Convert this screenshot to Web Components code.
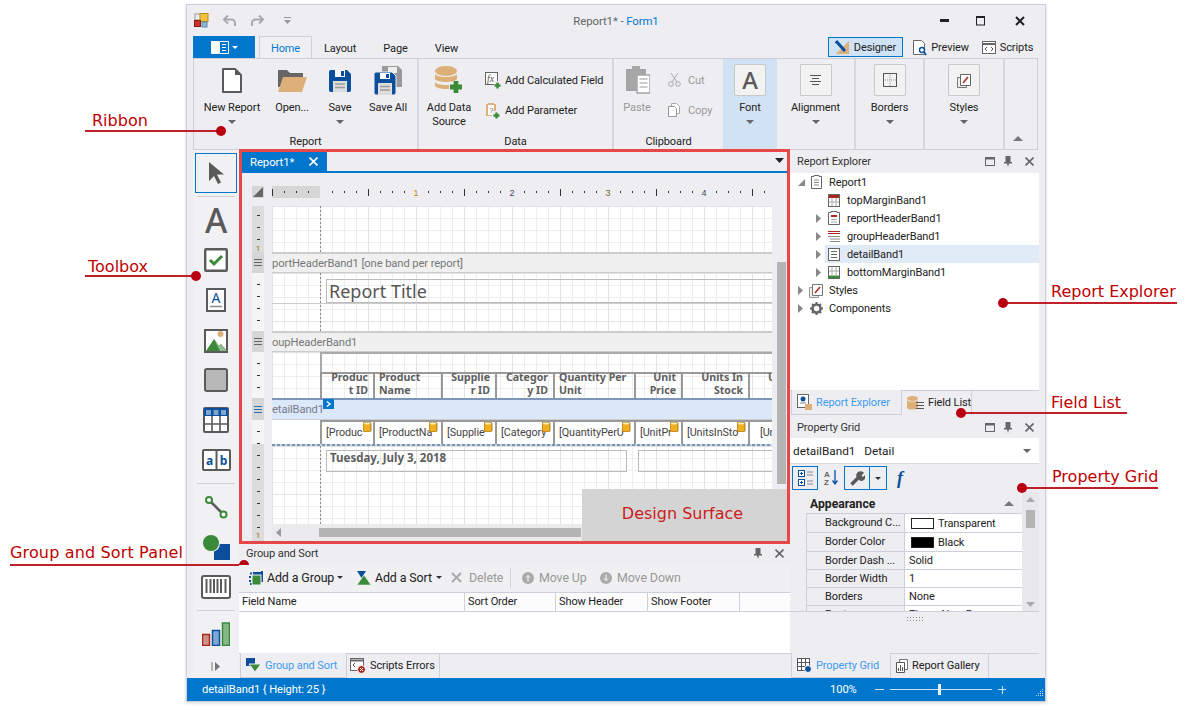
<!DOCTYPE html>
<html>
<head>
<meta charset="utf-8">
<title>Report Designer</title>
<style>
  html, body { margin: 0; background: #fff; }
  body { font: 11px Roboto, "Noto Sans", "Liberation Sans", sans-serif; letter-spacing: -0.1px; color: #222; width: 1186px; height: 710px; overflow: hidden; position: relative; }
</style>
</head>
<body>
<app-window>
  <title-bar></title-bar>
  <ribbon-tabs></ribbon-tabs>
  <ribbon-bar></ribbon-bar>
  <main-area>
    <tool-box slot="left"></tool-box>
    <design-surface slot="center"></design-surface>
    <group-sort slot="center"></group-sort>
    <report-explorer slot="right"></report-explorer>
    <property-grid slot="right"></property-grid>
  </main-area>
  <status-bar></status-bar>
</app-window>
<call-out dot="end" style="--x:85px;--y:130px;--w:136px;--tx:7px">Ribbon</call-out>
<call-out dot="end" style="--x:85px;--y:275px;--w:111px;--tx:3px;--by:-1px">Toolbox</call-out>
<call-out dot="end" style="--x:10px;--y:564px;--w:234px;--tx:0px;--by:2px;letter-spacing:.15px">Group and Sort Panel</call-out>
<call-out dot="start" style="--x:1003px;--y:302px;--w:174px;--tx:48px;--by:1px">Report Explorer</call-out>
<call-out dot="start" style="--x:961px;--y:412px;--w:166px;--tx:90px">Field List</call-out>
<call-out dot="start" style="--x:1022px;--y:487px;--w:136px;--tx:30px;--by:1px">Property Grid</call-out>

<script>
const G = '#5a5a5a', B = '#0b4f9c', GR = '#3a8a3a', T = '#dcb078', R = '#a8281b';
const plus = (x, y, s = 5, c = GR) => `<path d="M${x - s} ${y}h${s * 2}M${x} ${y - s}v${s * 2}" stroke="${c}" stroke-width="${s * 0.8}"/>`;

const ICONS = {
  logo: [15, 15, `<rect x="1" y="1" width="6" height="6" fill="#eee" stroke="#999"/><rect x="6" y="0.5" width="8" height="8" fill="#f2c23c" stroke="#b98a20"/><rect x="0.5" y="7.5" width="6" height="6" fill="#c8322a" stroke="#8a1a14"/><rect x="8" y="9" width="5" height="5" fill="#8fb7d8" stroke="#5a87a8"/>`],
  undo: [15, 13, `<path d="M6 1.5L2 5.5l4 4M2 5.5h7.5a3.5 3.5 0 0 1 3.5 3.5v3" fill="none" stroke="#aaa" stroke-width="2"/>`],
  redo: [15, 13, `<path d="M9 1.5l4 4-4 4M13 5.5H5.5A3.5 3.5 0 0 0 2 9v3" fill="none" stroke="#aaa" stroke-width="2"/>`],
  qa: [9, 7, `<path d="M1 0h7v1H1zM1 3h7L4.5 7z" fill="#999"/>`],
  appbook: [18, 13, `<path d="M.5.5h7v12h-7z" fill="#fff" stroke="#fff"/><path d="M8.5.5h9v12h-9z" fill="none" stroke="#fff"/><path d="M11 3.5h4M11 6.5h4M11 9.5h4" stroke="#fff"/>`],
  ddw: [6, 3, `<path d="M0 0h6L3 3z" fill="#fff"/>`],
  dd: [8, 4, `<path d="M0 0h8L4 4z" fill="#666"/>`],
  ddk: [6, 3, `<path d="M0 0h6L3 3z" fill="#333"/>`],
  win_min: [10, 3, `<rect width="9" height="3" fill="#222"/>`],
  win_max: [10, 10, `<rect x=".5" y="1" width="8" height="8" fill="none" stroke="#222"/><path d="M0 1h9" stroke="#222" stroke-width="2"/>`],
  win_close: [10, 10, `<path d="M1 1l8 8M9 1l-8 8" stroke="#222" stroke-width="2"/>`],
  designer: [15, 16, `<path d="M14 2v13H1z" fill="${T}"/><path d="M11 9v3H7.5z" fill="#cfe0f4"/><path d="M1 2l9 10" stroke="${B}" stroke-width="3"/>`],
  preview: [14, 17, `<path d="M.5 1.5h8l3 3v11H.5z" fill="#fff" stroke="#666"/><circle cx="9" cy="11" r="2.5" fill="#fff" stroke="${B}" stroke-width="1.4"/><path d="M11 13l2 3" stroke="${B}" stroke-width="1.8"/>`],
  scripts: [14, 13, `<rect x=".5" y=".5" width="13" height="12" fill="#fff" stroke="#666"/><path d="M.5 3h13" stroke="#666" stroke-width="2"/><path d="M5 6L3 8l2 2M9 6l2 2-2 2" fill="none" stroke="#555"/>`],
  newdoc: [20, 25, `<path d="M1 1h12l6 6v17H1z" fill="#fff" stroke="${G}" stroke-width="2" stroke-linejoin="round"/><path d="M13 1v6h6" fill="${G}"/>`],
  folder: [29, 23, `<path d="M0 1h9l3 3h13v14H0z" fill="#666"/><path d="M5 8h24l-5 15H0z" fill="${T}"/>`],
  save: [22, 23, `<path d="M2 1h16l4 4v16a2 2 0 0 1-2 2H2a2 2 0 0 1-2-2V3a2 2 0 0 1 2-2z" fill="${B}"/><rect x="6" y="1" width="10" height="7" fill="#fff"/><rect x="12" y="2" width="3" height="5" fill="${B}"/><rect x="4" y="12" width="14" height="11" fill="#ddd"/><path d="M6 15h10M6 18.500h10" stroke="#999" stroke-width="1.500"/>`],
  saveall: [29, 29, `<path d="M8 0h16l4 4v17H8z" fill="#999"/><rect x="14" y="1" width="9" height="6" fill="#eee"/><g transform="translate(0 6)"><path d="M2 0h16l4 4v17a2 2 0 0 1-2 2H2a2 2 0 0 1-2-2V2a2 2 0 0 1 2-2z" fill="${B}" stroke="#eeeef2"/><rect x="6" y="1" width="10" height="6" fill="#fff"/><rect x="12" y="2" width="3" height="4" fill="${B}"/><rect x="4" y="11" width="14" height="12" fill="#ddd"/><path d="M6 14.500h10M6 18h10" stroke="#999" stroke-width="1.500"/></g>`],
  datasource: [28, 28, `<ellipse cx="11" cy="5" rx="11" ry="5" fill="${T}"/><path d="M0 8c2 4 20 4 22 0v5c-2 4-20 4-22 0z" fill="${T}"/><path d="M0 16c2 4 20 4 22 0v4c-2 4-20 4-22 0z" fill="${T}"/><rect x="14" y="16" width="14" height="12" fill="#eeeef2"/>${plus(21, 21, 6)}`],
  calc: [16, 17, `<rect x=".5" y=".5" width="12" height="12" fill="#fff" stroke="#666"/><text x="2" y="10" font-family="Liberation Serif" font-style="italic" font-size="10" fill="#555">fx</text><rect x="9" y="9" width="7" height="8" fill="#eeeef2"/>${plus(12.500, 13.500, 3)}`],
  param: [15, 17, `<path d="M1 2h2v-1h6v1h2v12H1z" fill="${T}"/><rect x="3" y="3" width="6" height="10" fill="#fff"/><text x="4" y="11" font-family="Liberation Sans" font-size="8" fill="#666">?</text><rect x="7" y="9" width="8" height="8" fill="#eeeef2"/>${plus(11.500, 13.500, 3)}`],
  paste: [26, 28, `<path d="M2 3h6v-3h8v3h6v22H2z" fill="#a6a6a6"/><rect x="13" y="9" width="13" height="18" fill="#fff" stroke="#a6a6a6" stroke-width="1.500"/><path d="M15.500 13h8M15.500 17h8M15.500 21h8" stroke="#bbb" stroke-width="1.500"/>`],
  cut: [13, 14, `<path d="M4 9L10 0M9 9L3 0" stroke="#aaa" fill="none"/><circle cx="3" cy="11" r="2.300" fill="none" stroke="#aaa"/><circle cx="10" cy="11" r="2.300" fill="none" stroke="#aaa"/>`],
  copy: [12, 14, `<path d="M3.500.5h5l3 3v7h-8z" fill="#fff" stroke="#aaa"/><path d="M.5 3.500h6l2 2v8h-8z" fill="#fff" stroke="#999"/>`],
  align: [11, 10, `<path d="M0 .5h11M2 3.500h7M0 6.500h11M2 9.500h7" stroke="#555"/>`],
  borders: [14, 14, `<rect x=".5" y=".5" width="13" height="13" fill="none" stroke="#555"/><path d="M7 2v11M2 7h11" stroke="#999" stroke-dasharray="1 1"/>`],
  styles: [15, 15, `<path d="M.5 4.500h9v10h-9z" fill="#eee" stroke="#777"/><path d="M3.500 1.500h10v11h-10z" fill="#fff" stroke="#666"/><path d="M6 10l5-6" stroke="#b03a2e" stroke-width="1.800"/>`],
  collapse: [10, 5, `<path d="M0 5h10L5 0z" fill="#777"/>`],
  pointer: [16, 22, `<path d="M1 0v19l5-5 4 8 3-1.500-4-8h7z" fill="${G}"/>`],
  check: [24, 24, `<rect x="1.200" y="1.200" width="21.600" height="21.600" rx="1" fill="#fff" stroke="${G}" stroke-width="2.400"/><path d="M6 12l4 4 8-8" fill="none" stroke="${GR}" stroke-width="3"/>`],
  label: [20, 24, `<rect x="1" y="1" width="18" height="22" fill="#fff" stroke="${G}" stroke-width="2"/><text x="10" y="15" text-anchor="middle" font-family="Noto Sans" font-size="14" fill="${B}">A</text><path d="M4 18.500h12" stroke="#888" stroke-width="1.500"/>`],
  picture: [24, 25, `<rect x="1" y="2" width="22" height="22" fill="#fff" stroke="${G}" stroke-width="2"/><circle cx="16.500" cy="6" r="3" fill="${T}"/><path d="M2 23l8-12 5 7 2-2 6 7z" fill="${GR}"/><path d="M10 11l5 7 2-2 6 7h-7z" fill="#8fb98f"/>`],
  square: [24, 24, `<rect x="1" y="1" width="22" height="22" rx="2" fill="#b8b8b8" stroke="${G}" stroke-width="2"/>`],
  table: [26, 26, `<rect x="1" y="1" width="24" height="24" rx="1" fill="#fff" stroke="${G}" stroke-width="2"/><path d="M1 1h24v8H1z" fill="${B}"/><rect x="3" y="3" width="5" height="5" fill="#7aa6d0"/><rect x="10.500" y="3" width="5" height="5" fill="#7aa6d0"/><rect x="18" y="3" width="5" height="5" fill="#7aa6d0"/><path d="M9 9v16M17 9v16M1 17h24" stroke="${G}" stroke-width="1.600"/>`],
  ab: [29, 22, `<rect x="1" y="1" width="27" height="20" rx="1" fill="#fff" stroke="${G}" stroke-width="2"/><path d="M14.500 1v20" stroke="${G}" stroke-width="2"/><text x="7.500" y="16" text-anchor="middle" font-family="Noto Sans" font-weight="700" font-size="12" fill="${B}">a</text><text x="21.500" y="16" text-anchor="middle" font-family="Noto Sans" font-weight="700" font-size="12" fill="${B}">b</text>`],
  line: [24, 24, `<path d="M5 5l14 14" stroke="${G}" stroke-width="2.500"/><circle cx="5" cy="5" r="3" fill="#fff" stroke="${GR}" stroke-width="2"/><circle cx="19.500" cy="19.500" r="3" fill="#fff" stroke="${GR}" stroke-width="2"/>`],
  shapes: [27, 25, `<rect x="11" y="9" width="16" height="16" fill="${B}"/><circle cx="8.500" cy="8.500" r="8.500" fill="#eeeef2"/><circle cx="8" cy="8" r="8" fill="${GR}"/>`],
  barcode: [30, 24, `<rect x="1" y="1" width="28" height="22" rx="2" fill="#fff" stroke="${G}" stroke-width="2"/><path d="M5.500 4v14M9.500 4v14M13 4v14M16.500 4v14M20 4v14M24.500 4v14" stroke="${G}" stroke-width="2"/>`],
  chart: [28, 24, `<rect x="0.500" y="12.500" width="7" height="11" fill="#cf8f84" stroke="${R}" stroke-width="1.500"/><rect x="10.500" y="8.500" width="7" height="15" fill="#80a6d4" stroke="${B}" stroke-width="1.500"/><rect x="20.500" y="1" width="7" height="22.500" fill="#86b886" stroke="${GR}" stroke-width="1.500"/>`],
  more: [10, 9, `<path d="M1 0v9" stroke="#777"/><path d="M4 0l5 4.500L4 9z" fill="#777"/>`],
  db: [9, 10, `<path d="M0 1.500C0-.500 8-.500 8 1.500v7C8 10.500 0 10.500 0 8.500z" fill="#f0b020" stroke="#8a6a20" stroke-width=".8"/><ellipse cx="4" cy="1.500" rx="3.200" ry="1" fill="#fff2c0"/>`],
  rpt: [11, 14, `<path d="M.5 1.500h2.500v-1h5v1h2.500v12H.5z" fill="#fff" stroke="#666"/><path d="M3 5h5M3 7.500h5M3 10h5" stroke="#888"/>`],
  bandtop: [12, 13, `<rect x=".5" y=".5" width="11" height="12" fill="#fff" stroke="#666"/><path d="M1 1h10v3H1z" fill="${R}"/><path d="M4 4v8M8 4v8M1 8h10" stroke="#aaa"/>`],
  bandhead: [12, 14, `<path d="M.5 1.500h2.500v-1h6v1h2.500v12H.5z" fill="#fff" stroke="#666"/><path d="M3 5h6" stroke="${R}" stroke-width="2"/><path d="M3 8.500h6M3 11h6" stroke="#aaa"/>`],
  bandgroup: [14, 12, `<path d="M1 1.500h12M1 3.500h12" stroke="${R}"/><path d="M1 6.500h12M3 9h10M3 11.500h10" stroke="#888"/>`],
  banddetail: [12, 13, `<rect x=".5" y=".5" width="11" height="12" fill="#fff" stroke="#666"/><path d="M3 3.500h6M3 6.500h6M3 9.500h6" stroke="#666"/>`],
  bandbottom: [12, 13, `<rect x=".5" y=".5" width="11" height="12" fill="#fff" stroke="#666"/><path d="M4 1v8M8 1v8M1 5h10" stroke="#aaa"/><path d="M1 9.500h10V12H1z" fill="${GR}"/>`],
  treestyle: [15, 15, `<path d="M.5 4.500h9v10h-9z" fill="#eee" stroke="#999"/><path d="M3.500 1.500h10v11h-10z" fill="#fff" stroke="#777"/><path d="M6 10l5-6" stroke="#b03a2e" stroke-width="1.800"/>`],
  gear: [13, 13, `<circle cx="6.500" cy="6.500" r="4" fill="none" stroke="#666" stroke-width="2.600"/><path d="M6.500 0v2.500M6.500 10.500V13M0 6.500h2.500M10.500 6.500H13M2 2l1.500 1.500M9.500 9.500L11 11M2 11l1.500-1.500M9.500 3.500L11 2" stroke="#666" stroke-width="2"/>`],
  expand: [6, 9, `<path d="M0 0l5 4.500L0 9z" fill="#888"/>`],
  collapsed: [7, 7, `<path d="M7 0v7H0z" fill="#888"/>`],
  tabexp: [15, 16, `<rect x=".5" y=".5" width="11" height="13" fill="#fff" stroke="#666"/><circle cx="6" cy="5" r="2.500" fill="${B}"/><path d="M3 9h6" stroke="#888"/><rect x="8" y="10" width="7" height="6" fill="${T}"/>`],
  tabfield: [17, 14, `<ellipse cx="5.500" cy="2.500" rx="5.500" ry="2.500" fill="${T}"/><path d="M0 4c1 2 10 2 11 0v8c-1 2-10 2-11 0z" fill="${T}"/><path d="M9 6.500h8M9 9.500h8M9 12.500h8" stroke="#555"/>`],
  tabgroup: [15, 14, `<path d="M0 0h9v8H0z" fill="${B}"/><path d="M3 6h12l-6 8z" fill="${GR}" stroke="#eeeef2"/>`],
  taberr: [16, 16, `<rect x=".5" y=".5" width="13" height="12" fill="#fff" stroke="#666"/><path d="M.5 2.500h13" stroke="#666" stroke-width="2"/><path d="M5 5L3 7l2 2" fill="none" stroke="#555"/><circle cx="11.500" cy="11.500" r="4" fill="${R}" stroke="#fff"/><path d="M10 10l3 3M13 10l-3 3" stroke="#fff"/>`],
  tabprop: [15, 15, `<rect x=".5" y=".5" width="12" height="12" fill="#fff" stroke="#555"/><path d="M4.500 1v11M8.500 1v11M1 4.500h11M1 8.500h11" stroke="#555"/><circle cx="11" cy="11" r="3.500" fill="${B}" stroke="#fff"/>`],
  tabgal: [12, 14, `<path d="M3.500.5h8v10h-8z" fill="#fff" stroke="#777"/><path d="M.5 3.500h8v10h-8z" fill="#fff" stroke="#555"/><path d="M2.500 12V9M4.500 12V6M6.500 12V8" stroke="#555"/>`],
  pgcat: [15, 16, `<rect x=".5" y=".5" width="6" height="6" fill="#fff" stroke="${B}"/><rect x=".5" y="9.500" width="6" height="6" fill="#fff" stroke="${B}"/><path d="M2 3.500h3M3.500 2v3M2 12.500h3M3.500 11v3" stroke="${B}"/><path d="M9 2h6M9 5h6M9 11h6M9 14h6" stroke="#888"/>`],
  pgaz: [15, 17, `<text x="0" y="7" font-family="Liberation Sans" font-weight="700" font-size="8" fill="#666">A</text><text x="0" y="15" font-family="Liberation Sans" font-weight="700" font-size="8" fill="#666">Z</text><path d="M11 0v13M8.500 10.500L11 14l2.500-3.500" fill="none" stroke="${B}" stroke-width="1.300"/>`],
  wrench: [15, 15, `<path d="M1.500 13.500L8 7" stroke="${G}" stroke-width="3.500"/><path d="M7 7a4 4 0 0 1 7-5l-2.500 2.500 1.500 1.500 2-2a4 4 0 0 1-6 5z" fill="${G}"/>`],
  grpadd: [15, 14, `<path d="M1 2.500h2M1 5v2M1 9v2M1 13h2M12 1h2" stroke="${B}" stroke-width="2"/><rect x="4" y="1" width="10" height="10" fill="${B}"/><rect x="3" y="4" width="9" height="10" fill="${GR}" stroke="#f0f0f0"/>`],
  sortadd: [14, 14, `<path d="M0 0h9L4.500 7z" fill="${B}"/><path d="M7 4l7 10H0z" fill="${GR}" stroke="#f0f0f0" stroke-width=".6"/>`],
  del: [11, 11, `<path d="M1 1l9 9M10 1l-9 9" stroke="#aaa" stroke-width="2"/>`],
  up: [12, 12, `<circle cx="6" cy="6" r="6" fill="#aaa"/><path d="M6 9.500v-6M4 5.500l2-2 2 2" fill="none" stroke="#fff"/>`],
  down: [12, 12, `<circle cx="6" cy="6" r="6" fill="#aaa"/><path d="M6 2.500v6M4 6.500l2 2 2-2" fill="none" stroke="#fff"/>`],
  rect: [10, 9, `<rect x=".5" y=".5" width="9" height="8" fill="none" stroke="#666"/><path d="M0 1.500h10" stroke="#666" stroke-width="2"/>`],
  pin: [8, 11, `<path d="M1.500 0h5v6h1.500v1.500H5L4 11l-1-3.500H0V6h1.500z" fill="#666"/>`],
  x: [9, 9, `<path d="M.5.500l8 8M8.500.500l-8 8" stroke="#666" stroke-width="1.600"/>`],
  xw: [9, 9, `<path d="M.5.500l8 8M8.500.500l-8 8" stroke="#fff" stroke-width="1.600"/>`],
  tri: [9, 5, `<path d="M0 0h9L4.500 5z" fill="#222"/>`],
  tl: [10, 10, `<path d="M10 0v10H0z" fill="#666"/>`],
  sbleft: [5, 9, `<path d="M5 0v9L0 4.500z" fill="#999"/>`],
  sbup: [9, 5, `<path d="M0 5h9L4.500 0z" fill="#aaa"/>`],
  sbdn: [9, 5, `<path d="M0 0h9L4.500 5z" fill="#aaa"/>`],
  grip: [9, 9, `<path d="M8 0h1v1H8zM6 2h1v1H6zM8 2h1v1H8zM4 4h1v1H4zM6 4h1v1H6zM8 4h1v1H8zM2 6h1v1H2zM4 6h1v1H4zM6 6h1v1H6zM8 6h1v1H8z" fill="#b8d4ee"/>`]
};

const FONT = `Roboto, "Noto Sans", "Liberation Sans", sans-serif`;

class UiIcon extends HTMLElement {
  constructor() {
    super();
    this.attachShadow({ mode: 'open' });
  }
  connectedCallback() {
    const [w, h, body] = ICONS[this.getAttribute('name')];
    this.shadowRoot.innerHTML = `<style>:host{display:inline-flex;flex:none;line-height:0;letter-spacing:0}</style>
      <svg xmlns="http://www.w3.org/2000/svg" width="${w}" height="${h}" viewBox="0 0 ${w} ${h}">${body}</svg>`;
  }
}

// Small base so each part only has to give its markup
class Part extends HTMLElement {
  constructor() {
    super();
    this.attachShadow({ mode: 'open' });
  }
  connectedCallback() {
    this.shadowRoot.innerHTML = this.markup();
  }
}

class AppWindow extends Part {
  markup() {
    return `<style>
      :host { display: flex; flex-direction: column; box-sizing: border-box; width: 860px; height: 698px; margin: 4px 0 0 186px;
        background: #eeeef2; border: 1px solid #cfcfdc; box-shadow: 0 1px 3px rgba(0,0,0,.18); font-family: ${FONT}; }
    </style><slot></slot>`;
  }
}

class TitleBar extends Part {
  markup() {
    return `<style>
      :host { display: grid; grid-template-columns: 1fr auto 1fr; align-items: center; height: 31px; flex: none; }
      .l { display: flex; align-items: center; padding-left: 7px; }
      .l ui-icon:nth-child(2) { margin-left: 13px; }
      .l ui-icon:nth-child(3) { margin-left: 13px; }
      .l ui-icon:nth-child(4) { margin-left: 18px; }
      .t { color: #666; font-size: 11.400px; } .t b { font-weight: 400; color: #0078d0; }
      .r { display: flex; justify-content: flex-end; align-items: center; padding-right: 20px; }
      .r ui-icon:nth-child(1) { margin-right: 26px; }
      .r ui-icon:nth-child(2) { margin-right: 29px; }
    </style>
    <div class="l"><ui-icon name="logo"></ui-icon><ui-icon name="undo"></ui-icon><ui-icon name="redo"></ui-icon><ui-icon name="qa"></ui-icon></div>
    <div class="t">Report1* - <b>Form1</b></div>
    <div class="r"><ui-icon name="win_min"></ui-icon><ui-icon name="win_max"></ui-icon><ui-icon name="win_close"></ui-icon></div>`;
  }
}

class RibbonTabs extends Part {
  markup() {
    return `<style>
      :host { display: flex; align-items: stretch; height: 22px; flex: none; padding: 0 8px 0 6px; }
      .app { width: 62px; background: #0077cc; display: flex; align-items: center; justify-content: center; gap: 3px; }
      .tab { display: flex; align-items: center; justify-content: center; color: #222; padding-top: 2px; }
      .home { margin-left: 4px; width: 53px; box-sizing: border-box; border: 1px solid #cfcfdc; border-bottom: 0; color: #0078d0; background: #f0f0f4; }
      .sp { flex: 1; }
      .view { display: flex; align-items: center; gap: 4px; height: 20px; box-sizing: border-box; margin-top: 1px; }
      .des { width: 75px; justify-content: center; border: 1px solid #0077cc; background: #cfe2f6; }
      .pre { margin-left: 7px; width: 62px; justify-content: center; }
      .scr { margin-left: 6px; width: 59px; justify-content: center; }
    </style>
    <div class="app"><ui-icon name="appbook"></ui-icon><ui-icon name="ddw"></ui-icon></div>
    <div class="tab home">Home</div>
    <div class="tab" style="margin-left:12px">Layout</div>
    <div class="tab" style="margin-left:27px">Page</div>
    <div class="tab" style="margin-left:27px">View</div>
    <div class="sp"></div>
    <div class="view des"><ui-icon name="designer"></ui-icon>Designer</div>
    <div class="view pre"><ui-icon name="preview"></ui-icon>Preview</div>
    <div class="view scr"><ui-icon name="scripts"></ui-icon>Scripts</div>`;
  }
}

class RibbonBar extends Part {
  markup() {
    const large = (w, icon, label, arrow, off) => `<div class="lg ${off ? 'off' : ''}" style="width:${w}px">
      <div class="ic">${icon}</div><div class="lb">${label}</div>${arrow ? '<ui-icon class="ar" name="dd"></ui-icon>' : ''}</div>`;
    const i = n => `<ui-icon name="${n}"></ui-icon>`;
    const box = c => `<div class="bx">${c}</div>`;
    const small = (n, t, off) => `<div class="sm ${off ? 'off' : ''}"><span class="si">${i(n)}</span>${t}</div>`;
    return `<style>
      :host { display: flex; height: 92px; flex: none; margin: 0 7px 0 6px; box-sizing: border-box; background: #eeeef2;
        border: 1px solid #cfcfdc; border-bottom-width: 1px; }
      .g { display: flex; flex-direction: column; box-sizing: border-box; border-right: 2px solid #d6d6e0; flex: none; }
      .b { display: flex; flex: 1; }
      .cap { height: 18px; line-height: 22px; text-align: center; color: #222; flex: none; }
      .lg { display: flex; flex-direction: column; align-items: center; flex: none; }
      .ic { height: 42px; display: flex; align-items: center; justify-content: center; }
      .lb { line-height: 14px; text-align: center; white-space: nowrap; }
      .ar { margin-top: 5px; }
      .off { color: #999; }
      .col { display: flex; flex-direction: column; gap: 0; padding-top: 6px; }
      .sm { display: flex; align-items: center; height: 30px; white-space: nowrap; }
      .si { width: 20px; display: flex; justify-content: flex-start; }
      .bx { width: 32px; height: 32px; box-sizing: border-box; border: 1px solid #c8c8c8; background: #f2f2f2; display: flex; align-items: center; justify-content: center; border-radius: 1px; }
      .bx span { font: 500 24px "Noto Sans", sans-serif; color: ${G}; line-height: 1; }
      .font { background: #d2e2f5; border-right: 0; }
      .caret { align-self: flex-end; margin: 0 14px 8px auto; }
    </style>
    <div class="g" style="width:225px"><div class="b" style="padding-left:4px">
      ${large(68, i('newdoc'), 'New Report', 1)}${large(52, i('folder'), 'Open...')}${large(44, i('save'), 'Save', 1)}${large(52, i('saveall'), 'Save All')}
    </div><div class="cap">Report</div></div>
    <div class="g" style="width:195px"><div class="b">
      ${large(60, i('datasource'), 'Add Data<br>Source')}
      <div class="col" style="margin-left:6px">${small('calc', 'Add Calculated Field')}${small('param', 'Add Parameter')}</div>
    </div><div class="cap">Data</div></div>
    <div class="g" style="width:109px;border-right:0"><div class="b">
      ${large(46, i('paste'), 'Paste', 0, 1)}
      <div class="col" style="margin-left:8px">${small('cut', 'Cut', 1)}${small('copy', 'Copy', 1)}</div>
    </div><div class="cap">Clipboard</div></div>
    <div class="g font" style="width:54px"><div class="b">${large(54, box('<span>A</span>'), 'Font', 1)}</div></div>
    <div class="g" style="width:79px"><div class="b">${large(77, box(i('align')), 'Alignment', 1)}</div></div>
    <div class="g" style="width:69px"><div class="b">${large(67, box(i('borders')), 'Borders', 1)}</div></div>
    <div class="g" style="width:80px"><div class="b">${large(78, box(i('styles')), 'Styles', 1)}</div></div>
    <ui-icon class="caret" name="collapse"></ui-icon>`;
  }
}

class MainArea extends Part {
  markup() {
    return `<style>
      :host { display: flex; flex: 1; min-height: 0; }
      .left { width: 52px; flex: none; display: flex; }
      .center { width: 551px; flex: none; display: flex; flex-direction: column; margin-top: -1px; position: relative; z-index: 1; }
      .right { width: 249px; flex: none; display: flex; flex-direction: column; }
      ::slotted(*) { min-width: 0; }
    </style>
    <div class="left"><slot name="left"></slot></div>
    <div class="center"><slot name="center"></slot></div>
    <div class="right"><slot name="right"></slot></div>`;
  }
}

class ToolBox extends Part {
  markup() {
    const it = n => `<div class="it"><ui-icon name="${n}"></ui-icon></div>`;
    return `<style>
      :host { display: flex; flex-direction: column; flex: 1; padding: 3px 2px 0 8px; }
      :host { background: linear-gradient(90deg, #eeeef2 6px, #f1f1f3 6px); }
      .sel { height: 40px; flex: none; box-sizing: border-box; border: 1px solid #0077cc; background: #f1f1f3; display: flex; align-items: center; justify-content: center; }
      .it { height: 40px; flex: none; display: flex; align-items: center; justify-content: center; }
      .sep { height: 7px; flex: none; display: flex; align-items: center; padding: 0 2px; }
      .sep::after { content: ""; flex: 1; height: 1px; background: #cfcfdc; }
      .A { font: 500 34px "Noto Sans", sans-serif; color: ${G}; line-height: 40px; }
      .m { height: 24px; flex: none; display: flex; align-items: center; justify-content: center; }
    </style>
    <div class="sel"><ui-icon name="pointer"></ui-icon></div>
    <div class="sep"></div>
    <div class="it"><span class="A">A</span></div>
    ${it('check')}${it('label')}${it('picture')}${it('square')}${it('table')}${it('ab')}
    <div class="sep"></div>
    ${it('line')}${it('shapes')}${it('barcode')}
    <div class="sep"></div>
    ${it('chart')}
    <div class="m"><ui-icon name="more"></ui-icon></div>`;
  }
}

class DesignSurface extends Part {
  ruler() {
    let s = '';
    for (let x = 0; x <= 500; x += 12) {
      if (x === 0 || (x >= 96 && (x - 96) % 96 === 0)) s += `<path d="M${x + .5} 3v7" stroke="#333"/>`;
      else if (x >= 144 && (x - 48) % 96 === 0) {
        const n = (x - 48) / 96;
        s += `<text x="${x}" y="10" text-anchor="middle" font-size="9" font-family="Liberation Sans" fill="${n === 1 ? '#b8860b' : n === 3 ? '#6a6a20' : '#445'}">${n}</text>`;
      } else if (x !== 48) s += `<path d="M${x + .5} 5v2" stroke="#333"/>`;
    }
    return `<svg width="500" height="12">${s}</svg>`;
  }
  markup() {
    const hd = [[53, 'Produc<br>t ID', 'r'], [68, 'Product<br>Name'], [54, 'Supplie<br>r ID', 'r'], [58, 'Categor<br>y ID', 'r'], [81, 'Quantity Per<br>Unit'], [47, 'Unit<br>Price', 'r'], [67, 'Units In<br>Stock', 'r'], [30, '<i style="font-style:normal;margin-left:14px">U</i>']];
    const dt = [['[Produc', 41], ['[ProductNa', 54], ['[Supplie', 41], ['[Category', 45], ['[QuantityPerU', 67], ['[UnitPr', 34], ['[UnitsInSto', 54], ['<i style="font-style:normal;margin-left:6px">[Ur</i>']];
    const cols = hd.map(h => h[0] + 'px').join(' ');
    return `<style>
      :host { display: flex; flex-direction: column; height: 395px; flex: none; box-sizing: border-box; border: 3px solid #e8474a; position: relative; background: #eeeef2; }
      .tabs { height: 21px; flex: none; border-bottom: 2px solid #0077cc; box-sizing: border-box; display: flex; position: relative; }
      .tab { width: 85px; background: #0077cc; color: #fff; display: flex; align-items: center; padding-left: 8px; box-sizing: border-box; gap: 15px; font-size: 11.400px; }
      .tri { position: absolute; right: 3px; top: 6px; }
      .body { flex: 1; display: flex; flex-direction: column; padding: 13px 0 0 10px; min-height: 0; overflow: hidden; }
      .rr { display: flex; height: 12px; flex: none; margin-bottom: 8px; }
      .corner { width: 12px; background: #d6d6d6; display: flex; align-items: flex-end; justify-content: flex-end; padding: 0 1px 1px 0; box-sizing: border-box; }
      .hr { margin-left: 8px; width: 500px; height: 12px; background: linear-gradient(90deg, #d6d6d6 48px, transparent 48px); }
      .hr svg { display: block; }
      .row { display: flex; flex: none; }
      .v { width: 12px; flex: none; background-repeat: no-repeat; background-size: 3px 100%; background-position: 4.500px 0; }
      .dk { background-color: #dcdcdc; } .lt { background-color: #f5f5f5; }
      .ticks { background-image: repeating-linear-gradient(#333 0 1px, transparent 1px 12px); }
      .handle { background: #d6d6d6; display: flex; align-items: center; justify-content: center; }
      .handle i { display: block; width: 8px; height: 5px; border-top: 1px solid #666; border-bottom: 1px solid #666; position: relative; }
      .handle i::after { content: ""; position: absolute; left: 0; right: 0; top: 2px; height: 1px; background: #666; }
      .handle.hb i { border-color: #2a6fb0; } .handle.hb i::after { background: #2a6fb0; }
      .a { margin-left: 8px; width: 500px; overflow: hidden; flex: none; position: relative; }
      .grid { background-color: #fff; background-image:
          linear-gradient(#888 50%, transparent 0),
          linear-gradient(90deg, #e2e2e2 1px, transparent 1px),
          linear-gradient(#e2e2e2 1px, transparent 1px),
          linear-gradient(90deg, #eeeeee 1px, transparent 1px),
          linear-gradient(#eeeeee 1px, transparent 1px);
        background-size: 1px 4px, 48px 48px, 48px 48px, 12px 12px, 12px 12px;
        background-position: 48px 0, 0 0, 0 0, 0 0, 0 0;
        background-repeat: repeat-y, repeat, repeat, repeat, repeat; }
      .band { box-sizing: border-box; background: #f0f0f0; border-top: 2px solid #ccc; border-bottom: 1px solid #ccc; color: #777; font-size: 11.200px; display: flex; align-items: center; white-space: nowrap; }
      .band.cur { background: #dbe8fa; border-top-color: #7d96b8; color: #7a7a8a; }
      .title { position: absolute; left: 54px; right: -2px; top: 6px; height: 24px; box-sizing: border-box; border: 1px solid #bbb; font: 18px/22px "Noto Sans", sans-serif; letter-spacing: 0; color: #555; padding-left: 2px; }
      .hl { position: absolute; left: 0; right: 0; top: 30px; height: 1px; background: #ccc; }
      .tbl { display: grid; grid-template-columns: ${cols}; margin-left: 48px; white-space: nowrap; }
      .tbl > div { box-sizing: border-box; border-left: 2px solid #999; position: relative; }
      .th { position: absolute; left: 0; top: 20px; border-top: 2px solid #999; height: 26px; font: 700 10.600px/13px "Noto Sans", sans-serif; letter-spacing: 0; color: #5e5e5e; }
      .th span { display: block; margin-top: -3px; padding: 0 0 0 4px; }
      .th div.r span { text-align: right; padding: 0 5px 0 0; }
      .toprule { position: absolute; left: 48px; right: 0; top: 0; height: 2px; background: #aaa; }
      .vrule { position: absolute; left: 48px; top: 0; height: 46px; width: 2px; background: #aaa; }
      .dd { border-top: 2px solid #999; height: 24px; line-height: 22px; color: #444; font-size: 10.800px; }
      .dd > div { padding-left: 4px; }
      .dd ui-icon { position: absolute; top: 0; }
      .date { position: absolute; top: 4px; height: 22px; box-sizing: border-box; border: 1px solid #bbb; font: 700 11.500px/13px "Noto Sans", sans-serif; letter-spacing: 0; color: #5e5e5e; padding: 0 0 0 3px; }
      .scr { height: 17px; flex: none; background: #ebebee; margin-left: 8px; width: 514px; position: relative; display: flex; align-items: center; padding-left: 47px; box-sizing: border-box; }
      .scr .th2 { width: 262px; height: 9px; background: #b4b4b4; }
      .scr ui-icon { position: absolute; left: 4px; top: 4px; }
      .vs { position: absolute; right: 0; top: 54px; width: 14px; height: 278px; background: #eeeef2; }
      .vs b { position: absolute; left: 4px; top: 56px; width: 9px; bottom: 0; background: #b4b4b4; }
      .mark { position: absolute; right: 0; bottom: 0; width: 205px; height: 52px; box-sizing: border-box; padding: 0 4px 3px 0; background: #d4d4d4; color: #cc1b1b; font: 16px "DejaVu Sans", sans-serif; letter-spacing: 0; display: flex; align-items: center; justify-content: center; }
      .flag { position: absolute; left: 51px; top: -1px; width: 11px; height: 10px; background: #0077cc; z-index: 2; }
      .flag svg { display: block; }
      .n { position: absolute; left: 0; width: 12px; text-align: center; font-size: 8px; line-height: 8px; color: #8a6d1a; }
    </style>
    <div class="tabs"><div class="tab">Report1*<ui-icon name="xw"></ui-icon></div><ui-icon class="tri" name="tri"></ui-icon></div>
    <div class="body">
      <div class="rr"><div class="corner"><ui-icon name="tl"></ui-icon></div><div class="hr">${this.ruler()}</div></div>
      <div class="row" style="height:46px"><div class="v dk ticks" style="background-position:4.500px 9px;background-size:3px 36px;position:relative"><span class="n" style="top:39px">1</span></div><div class="a grid"></div></div>
      <div class="row" style="height:21px"><div class="v handle"><i></i></div><div class="a band">portHeaderBand1 [one band per report]</div></div>
      <div class="row" style="height:58px"><div class="v lt ticks" style="background-position:4.500px 11px"></div><div class="a grid"><div class="title">Report Title</div><div class="hl"></div></div></div>
      <div class="row" style="height:21px"><div class="v handle"><i></i></div><div class="a band">oupHeaderBand1</div></div>
      <div class="row" style="height:46px"><div class="v lt ticks" style="background-position:4.500px 11px"></div><div class="a grid" style="overflow:hidden">
        <div class="toprule"></div><div class="vrule"></div>
        <div class="tbl th">${hd.map(h => `<div class="${h[2] || ''}"><span>${h[1]}</span></div>`).join('')}</div>
      </div></div>
      <div class="row" style="height:22px"><div class="v handle hb"><i></i></div><div class="a band cur" style="overflow:visible">
        <span class="flag"><svg width="11" height="10"><path d="M4 2.500l3 2.500-3 2.500" fill="none" stroke="#fff" stroke-width="1.500"/></svg></span>etailBand1</div></div>
      <div class="row" style="height:24px"><div class="v lt ticks" style="background-position:4.500px 11px"></div><div class="a" style="background:#fff">
        <div class="tbl dd">${dt.map(d => `<div>${d[0]}${d[1] ? `<ui-icon name="db" style="left:${d[1]}px"></ui-icon>` : ''}</div>`).join('')}</div>
      </div></div>
      <div class="row" style="height:2px"><div class="v dk"></div><div class="a" style="background:repeating-linear-gradient(90deg,#7d96b8 0 3px,#c8d4e4 3px 5px)"></div></div>
      <div class="row" style="height:78px"><div class="v dk ticks" style="background-position:4.500px 9px"></div><div class="a grid"><div class="date" style="left:54px;width:301px">Tuesday, July 3, 2018</div><div class="date" style="left:366px;width:140px"></div></div></div>
      <div class="row" style="height:17px"><div class="v dk ticks" style="position:relative;background-position:4.500px 3px;background-size:3px 2px"><span class="n" style="top:8px">1</span></div><div class="scr"><ui-icon name="sbleft"></ui-icon><div class="th2"></div></div></div>
    </div>
    <div class="vs"><b></b></div>
    <div class="mark">Design Surface</div>`;
  }
}

class DockHead extends Part {
  markup() {
    const btn = (this.getAttribute('btns') || '').split(' ').filter(Boolean);
    return `<style>
      :host { display: flex; align-items: center; height: 20px; flex: none; padding: 0 6px; color: #333; }
      .t { flex: 1; } .b { display: flex; align-items: center; gap: 9px; }
      .b ui-icon:last-child { margin-left: 4px; }
    </style><div class="t"><slot></slot></div><div class="b">${btn.map(n => `<ui-icon name="${n}"></ui-icon>`).join('')}</div>`;
  }
}

class DockTabs extends Part {
  markup() {
    return `<style>
      :host { display: flex; height: 25px; flex: none; align-items: stretch; box-sizing: border-box; border-top: 1px solid #cfcfdc; padding-left: 1px; white-space: nowrap; }
    </style><slot></slot>`;
  }
}

class DockTab extends Part {
  markup() {
    return `<style>
      :host { display: flex; align-items: center; gap: 4px; box-sizing: border-box; padding-left: 5px; border-right: 1px solid #cfcfdc; color: #222; margin-top: -1px; }
      :host([active]) { color: #3d9bf0; background: #eeeef2; border-left: 1px solid #cfcfdc; border-bottom: 1px solid #cfcfdc; }
    </style><ui-icon name="${this.getAttribute('icon')}"></ui-icon><slot></slot>`;
  }
}

class GroupSort extends Part {
  markup() {
    const bt = (n, t, w, gap, cls = '', car = '') => `<span class="bt ${cls}" style="width:${w}px;gap:${gap}px"><ui-icon name="${n}"></ui-icon>${t}${car ? '<ui-icon name="ddk"></ui-icon>' : ''}</span>`;
    return `<style>
      :host { display: flex; flex-direction: column; flex: 1; min-height: 0; }
      dock-head { padding-right: 6px; padding-left: 7px; height: 18px; }
      .bar { height: 27px; flex: none; box-sizing: border-box; padding: 0 0 2px 10px; margin-top: 3px; background: #f0f0f2; display: flex; align-items: center; font-size: 12.400px; }
      .bt { display: flex; align-items: center; white-space: nowrap; flex: none; }
      .off { color: #999; }
      .sep { width: 1px; height: 20px; background: #d0d0da; margin-right: 11px; flex: none; }
      .hd { display: grid; grid-template-columns: 226px 91px 92px 92px 1fr; height: 20px; flex: none; box-sizing: border-box; background: #fcfcfd; border-top: 1px solid #cfcfdc; border-bottom: 1px solid #cfcfdc; line-height: 17px; }
      .hd div { padding-left: 3px; border-right: 1px solid #cfcfdc; } .hd div:last-child { border: 0; }
      .wh { height: 41px; flex: none; background: #fff; }
    </style>
    <dock-head btns="pin x">Group and Sort</dock-head>
    <div class="bar">
      ${bt('grpadd', 'Add a Group', 108, 3, '', 1)}${bt('sortadd', 'Add a Sort', 94, 4, '', 1)}${bt('del', 'Delete', 59, 7, 'off')}
      <div class="sep"></div>
      ${bt('up', 'Move Up', 78, 5, 'off')}${bt('down', 'Move Down', 90, 5, 'off')}
    </div>
    <div class="hd"><div>Field Name</div><div>Sort Order</div><div>Show Header</div><div>Show Footer</div><div></div></div>
    <div class="wh"></div>
    <dock-tabs><dock-tab active icon="tabgroup" style="width:107px">Group and Sort</dock-tab><dock-tab icon="taberr" style="width:93px;padding-left:3px">Scripts Errors</dock-tab></dock-tabs>`;
  }
}

class ReportExplorer extends Part {
  markup() {
    const row = (lvl, arrow, icon, text, sel) => `<div class="row" style="padding-left:${lvl ? 23 : 5}px">
      <span class="ar">${arrow ? `<ui-icon name="${arrow}"></ui-icon>` : ''}</span>
      <span class="lab ${sel ? 'sel' : ''}"><span class="ic"><ui-icon name="${icon}"></ui-icon></span>${text}</span></div>`;
    return `<style>
      :host { display: flex; flex-direction: column; flex: none; height: 267px; }
      dock-head { height: 23px; padding-right: 5px; padding-left: 7px; }
      .tree { height: 217px; background: #fff; flex: none; box-sizing: border-box; }
      .row { display: flex; height: 18px; align-items: center; }
      .ar { width: 12px; display: flex; justify-content: center; flex: none; }
      .lab { flex: 1; display: flex; align-items: center; height: 18px; padding-right: 4px; }
      .sel { background: #e1ebf7; }
      .ic { width: 18px; display: flex; justify-content: center; margin-right: 4px; }
    </style>
    <dock-head btns="rect pin x">Report Explorer</dock-head>
    <div class="tree">
      ${row(0, 'collapsed', 'rpt', 'Report1')}
      ${row(1, '', 'bandtop', 'topMarginBand1')}
      ${row(1, 'expand', 'bandhead', 'reportHeaderBand1')}
      ${row(1, 'expand', 'bandgroup', 'groupHeaderBand1')}
      ${row(1, 'expand', 'banddetail', 'detailBand1', 1)}
      ${row(1, 'expand', 'bandbottom', 'bottomMarginBand1')}
      ${row(0, 'expand', 'treestyle', 'Styles')}
      ${row(0, 'expand', 'gear', 'Components')}
    </div>
    <dock-tabs><dock-tab active icon="tabexp" style="width:111px">Report Explorer</dock-tab><dock-tab icon="tabfield" style="width:70px">Field List</dock-tab></dock-tabs>`;
  }
}

class PropertyGrid extends Part {
  markup() {
    const row = (k, v, h, sw) => `<div class="r" style="height:${h}px"><div class="k">${k}</div><div class="v">${sw ? `<i class="sw" style="background:${sw}"></i>` : ''}${v}</div></div>`;
    return `<style>
      :host { display: flex; flex-direction: column; flex: 1; min-height: 0; }
      dock-head { padding-right: 5px; padding-left: 7px; height: 21px; }
      .combo { height: 26px; background: #fff; flex: none; display: flex; align-items: center; padding: 0 8px 0 3px; border-bottom: 1px solid #d8d8e0; box-sizing: border-box; font-size: 11.800px; letter-spacing: 0; }
      .combo span { flex: 1; }
      .tools { height: 28px; flex: none; display: flex; align-items: center; padding-left: 2px; gap: 0; }
      .tb { height: 24px; box-sizing: border-box; display: flex; align-items: center; justify-content: center; }
      .on { border: 1px solid #0077cc; }
      .pg { height: 120px; flex: none; display: flex; position: relative; overflow: hidden; border-bottom: 1px solid #cfcfdc; box-sizing: border-box; }
      .list { flex: 1; }
      .cat { height: 21px; box-sizing: border-box; padding: 2px 0 0 20px; display: flex; align-items: center; font-weight: 700; font-size: 12.200px; letter-spacing: 0; color: #222; }
      .cat ui-icon { margin-left: auto; margin-right: 8px; }
      .r { display: flex; margin-left: 16px; box-sizing: border-box; border-top: 1px solid #cfcfdc; }
      .k { width: 99px; padding-left: 18px; box-sizing: border-box; border-left: 1px solid #cfcfdc; border-right: 1px solid #cfcfdc; line-height: 17px; white-space: nowrap; overflow: hidden; }
      .v { flex: 1; background: #fff; padding-left: 4px; display: flex; align-items: center; gap: 4px; white-space: nowrap; }
      .sw { width: 21px; height: 9px; border: 1px solid #222; display: block; margin-left: 2px; }
      .sb { width: 17px; flex: none; background: #e8e8ec; position: relative; display: flex; flex-direction: column; align-items: center; }
      .sb b { width: 9px; height: 18px; background: #b4b4b4; margin-top: 8px; }
      .sb ui-icon:first-child { margin-top: 5px; } .sb ui-icon:last-child { margin-top: auto; margin-bottom: 4px; }
      .split { height: 12px; flex: none; display: flex; justify-content: center; align-items: center; }
      .split i { width: 17px; height: 5px; background-image: radial-gradient(#888 .6px, transparent .7px); background-size: 3px 3px; margin-left: -1px; }
      .fill { flex: 1; }
    </style>
    <dock-head btns="rect pin x">Property Grid</dock-head>
    <div class="combo"><span>detailBand1&nbsp;&nbsp;&nbsp;Detail</span><ui-icon name="dd"></ui-icon></div>
    <div class="tools">
      <div class="tb on" style="width:26px"><ui-icon name="pgcat"></ui-icon></div>
      <div class="tb" style="width:26px"><ui-icon name="pgaz"></ui-icon></div>
      <div class="tb on" style="width:26px"><ui-icon name="wrench"></ui-icon></div>
      <div class="tb on" style="width:17px;border-left:0"><ui-icon name="ddk"></ui-icon></div>
      <svg width="26" height="24" style="display:flex"><text x="13" y="18" text-anchor="middle" font-family="Liberation Serif" font-style="italic" font-weight="700" font-size="18" fill="${B}">f</text></svg>
    </div>
    <div class="pg">
      <div class="list">
        <div class="cat">Appearance<ui-icon name="collapse"></ui-icon></div>
        ${row('Background C...', 'Transparent', 19, '#fff')}
        ${row('Border Color', 'Black', 19, '#000')}
        ${row('Border Dash ...', 'Solid', 18)}
        ${row('Border Width', '1', 18)}
        ${row('Borders', 'None', 18)}
        ${row('Font', 'Times New Roman', 18)}
      </div>
      <div class="sb"><ui-icon name="sbup"></ui-icon><b></b><ui-icon name="sbdn"></ui-icon></div>
    </div>
    <div class="split"><i></i></div>
    <div class="fill"></div>
    <dock-tabs><dock-tab active icon="tabprop" style="width:100px">Property Grid</dock-tab><dock-tab icon="tabgal" style="width:98px">Report Gallery</dock-tab></dock-tabs>`;
  }
}

class StatusBar extends Part {
  markup() {
    return `<style>
      :host { display: flex; align-items: center; height: 23px; flex: none; background: #0077cc; color: #fff; padding-left: 15px; position: relative; font-size: 11.200px; }
      .sp { flex: 1; }
      .z { width: 30px; margin-right: 15px; }
      .m { width: 9px; height: 1px; background: #cfe4f8; }
      .sl { width: 102px; height: 1px; background: #cfe4f8; margin: 0 6px; position: relative; }
      .sl b { position: absolute; left: 48px; top: -5px; width: 3px; height: 11px; background: #e4f0fb; }
      .p { width: 8px; height: 8px; background: linear-gradient(#cfe4f8,#cfe4f8) center/8px 1px no-repeat, linear-gradient(#cfe4f8,#cfe4f8) center/1px 8px no-repeat; margin-right: 28px; }
      ui-icon { margin-top: 8px; margin-right: 2px; }
    </style>
    <div>detailBand1 { Height: 25 }</div><div class="sp"></div>
    <div class="z">100%</div><div class="m"></div><div class="sl"><b></b></div><div class="p"></div><ui-icon name="grip"></ui-icon>`;
  }
}

class CallOut extends Part {
  markup() {
    return `<style>
      :host { position: absolute; left: var(--x); top: var(--y); width: var(--w); height: 2px; background: #c0202a; font-family: "DejaVu Sans", sans-serif; letter-spacing: 0; }
      .t { position: absolute; left: var(--tx); bottom: var(--by, 0); color: #c00000; font-size: 16px; line-height: 22px; white-space: nowrap; }
      .d { position: absolute; top: -4px; width: 10px; height: 10px; border-radius: 50%; background: #b80010; }
      :host([dot=end]) .d { right: -5px; } :host([dot=start]) .d { left: -5px; }
    </style><span class="t"><slot></slot></span><span class="d"></span>`;
  }
}

customElements.define('ui-icon', UiIcon);
customElements.define('app-window', AppWindow);
customElements.define('title-bar', TitleBar);
customElements.define('ribbon-tabs', RibbonTabs);
customElements.define('ribbon-bar', RibbonBar);
customElements.define('main-area', MainArea);
customElements.define('tool-box', ToolBox);
customElements.define('design-surface', DesignSurface);
customElements.define('dock-head', DockHead);
customElements.define('dock-tabs', DockTabs);
customElements.define('dock-tab', DockTab);
customElements.define('group-sort', GroupSort);
customElements.define('report-explorer', ReportExplorer);
customElements.define('property-grid', PropertyGrid);
customElements.define('status-bar', StatusBar);
customElements.define('call-out', CallOut);
</script>
</body>
</html>
